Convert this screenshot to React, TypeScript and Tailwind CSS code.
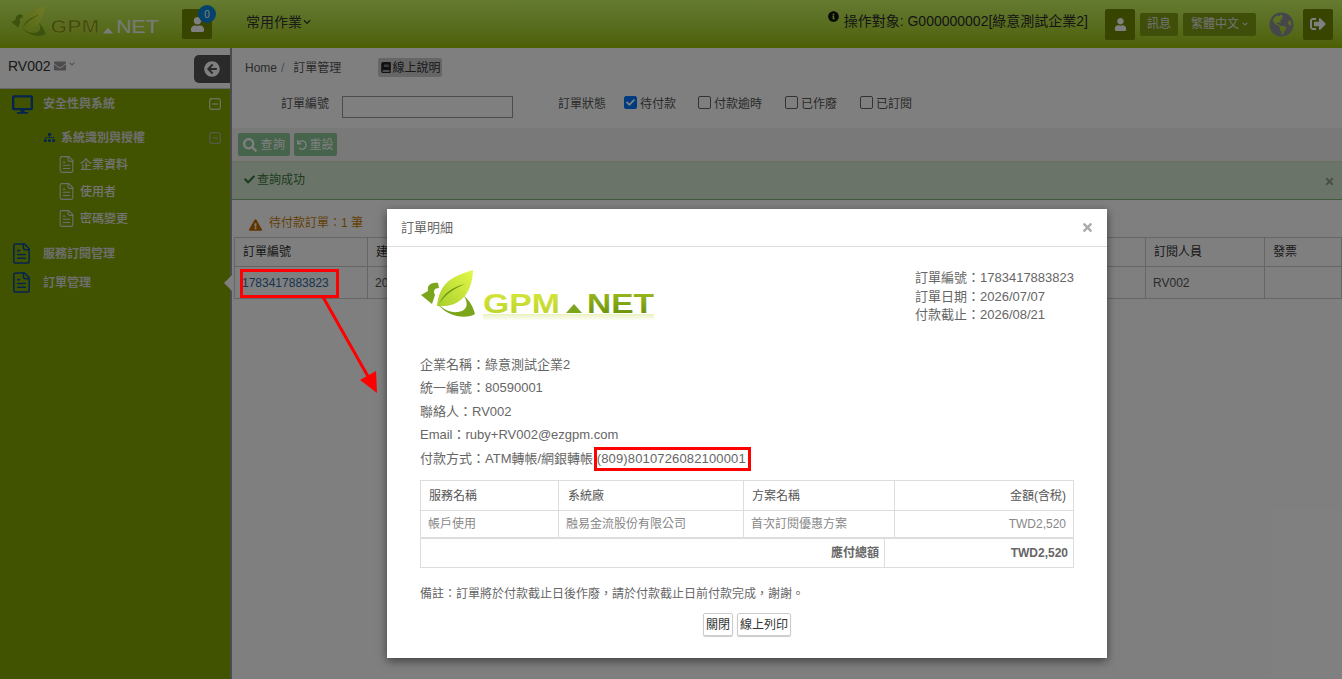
import React from "react";
import { FaUser, FaSearch, FaUndo, FaCheck, FaExclamationTriangle, FaInfoCircle, FaSignOutAlt, FaArrowCircleLeft, FaEnvelope, FaDesktop, FaSitemap, FaBook, FaGlobeAmericas, FaChevronDown, FaTimes } from "react-icons/fa";
import { LuFileText, LuSquareMinus } from "react-icons/lu";

const font = { fontFamily: '"Liberation Sans","Noto Sans CJK TC",sans-serif' };

function Logo({ w, h, light }: { w: number; h: number; light?: boolean }) {
  return (
    <svg width={w} height={h} viewBox="0 0 235 57" className="block">
      <defs>
        <linearGradient id="lf" x1="0" y1="1" x2="1" y2="0">
          <stop offset="0" stopColor="#a9cf2c" />
          <stop offset="1" stopColor="#e4f84a" />
        </linearGradient>
        <linearGradient id="gpm" x1="0" y1="0" x2="0" y2="1">
          <stop offset="0" stopColor="#d8ea3c" />
          <stop offset="1" stopColor="#b9d02a" />
        </linearGradient>
        <linearGradient id="net" x1="0" y1="0" x2="0" y2="1">
          <stop offset="0" stopColor="#a5c020" />
          <stop offset="1" stopColor="#5f8a08" />
        </linearGradient>
        <linearGradient id="fade" x1="0" y1="0" x2="0" y2="1">
          <stop offset="0" stopColor="#b9d02a" stopOpacity="0.3" />
          <stop offset="1" stopColor="#b9d02a" stopOpacity="0" />
        </linearGradient>
      </defs>
      <path d="M18 15 C10 14 7 18 8 23 L1 27 L12 36 L15 27 C13 23 14 20 19 20Z" fill="#7ba51a" />
      <path d="M53 2 C35 8 20 12 17 38 C36 40 52 30 53 2Z" fill="url(#lf)" />
      <path d="M19 36 C23 26 32 19 45 16 C33 21 25 27 19 36Z" fill="#6f9a14" />
      <path d="M18 36 C26 48 46 52 55 46 C53 38 49 32 44 28 C49 36 47 43 38 44 C30 45 23 41 18 36Z" fill="#7ba51a" />
      <text x="63" y="45" fontFamily="Liberation Sans" fontWeight="700" fontSize="28" textLength="77" lengthAdjust="spacingAndGlyphs" fill={light ? "#7f9a08" : "url(#gpm)"} stroke={light ? "#d4dc60" : "none"} strokeWidth={light ? 1 : 0}>GPM</text>
      <path d="M146 45 L154 36 L162 45Z" fill={light ? "#f4f4f4" : "#7ba51a"} />
      <text x="167" y="45" fontFamily="Liberation Sans" fontSize="28" fontWeight={light ? "400" : "700"} textLength="67" lengthAdjust="spacingAndGlyphs" fill={light ? "#f4f4f4" : "url(#net)"}>NET</text>
      {!light && <rect x="63" y="46" width="171" height="7" fill="url(#fade)" />}
    </svg>
  );
}

function HeaderSquare({ children, className = "" }: { children: React.ReactNode; className?: string }) {
  return <div className={`flex items-center justify-center rounded-[2px] bg-[#6f8a00] ${className}`}>{children}</div>;
}

function SideDoc({ label }: { label: string }) {
  return (
    <div className="flex h-[27px] items-center pl-[57px] text-[12px] font-medium text-[#e8e8e8]">
      <LuFileText className="mr-[4px] h-[19px] w-[19px] text-[#dddddd]" strokeWidth={1.4} />
      {label}
    </div>
  );
}

function SideTop({ label, className = "" }: { label: string; className?: string }) {
  return (
    <div className={`flex h-[29px] items-center pl-[10px] text-[12px] font-bold text-[#dddddd] ${className}`}>
      <LuFileText className="mr-[10px] h-[23px] w-[23px] text-[#0a4a9a]" strokeWidth={1.6} />
      {label}
    </div>
  );
}

function Check({ label, checked, className = "" }: { label: string; checked?: boolean; className?: string }) {
  return (
    <div className={`flex h-[16px] items-center gap-[3px] text-[12px] text-[#555555] ${className}`}>
      <span className={`-mt-[4px] flex h-[13px] w-[13px] items-center justify-center rounded-[2px] border ${checked ? "border-[#0075ff] bg-[#0075ff]" : "border-[#666666] bg-white"}`}>
        {checked && <FaCheck className="h-[9px] w-[9px] text-white" />}
      </span>
      {label}
    </div>
  );
}

const heads = [
  ["訂單編號", "w-[133px]"],
  ["建立日期", "w-[130px]"],
  ["付款截止", "w-[130px]"],
  ["服務名稱", "w-[130px]"],
  ["方案名稱", "w-[130px]"],
  ["金額", "w-[129px]"],
  ["狀態", "w-[129px]"],
  ["訂閱人員", "w-[119px]"],
  ["發票", "flex-1"],
];

export default function App() {
  return (
    <div style={font} className="relative h-[679px] w-[1342px] overflow-hidden bg-white text-[12px] text-[#555555]">
      <header className="flex h-[48px] items-center bg-gradient-to-b from-[#cbf662] to-[#9ac000]">
        <div className="mb-[2px] ml-[10px] w-[172px]"><Logo w={150} h={36} light /></div>
        <HeaderSquare className="relative h-[30px] w-[30px]">
          <FaUser className="h-[15px] w-[15px] text-white" />
          <span className="absolute -right-[4px] -top-[4px] flex h-[18px] w-[18px] items-center justify-center rounded-full bg-[#0a86d8] text-[10px] text-white">0</span>
        </HeaderSquare>
        <div className="mb-[4px] ml-[34px] flex items-center gap-[1px] text-[14px] text-[#333333]">
          常用作業<FaChevronDown className="h-[8px] w-[8px]" />
        </div>
        <div className="ml-auto flex items-center">
          <FaInfoCircle className="mb-[16px] mr-[5px] h-[11px] w-[11px] text-[#111111]" />
          <span className="mb-[6px] text-[14px] text-[#2b2b2b]">操作對象: G000000002[綠意測試企業2]</span>
          <HeaderSquare className="ml-[17px] h-[31px] w-[30px]"><FaUser className="h-[13px] w-[13px] text-white" /></HeaderSquare>
          <HeaderSquare className="ml-[5px] h-[23px] w-[38px] !bg-[#7f9c10] text-[12px] text-[#e6e6e6]">訊息</HeaderSquare>
          <HeaderSquare className="ml-[5px] h-[23px] w-[73px] gap-[3px] !bg-[#7f9c10] text-[12px] text-[#e6e6e6]">繁體中文<FaChevronDown className="h-[6px] w-[6px]" /></HeaderSquare>
          <FaGlobeAmericas className="ml-[13px] h-[25px] w-[25px] text-[#8a8f96]" />
          <HeaderSquare className="ml-[9px] mr-[9px] h-[31px] w-[30px]"><FaSignOutAlt className="h-[16px] w-[16px] text-white" /></HeaderSquare>
        </div>
      </header>

      <div className="flex h-[631px]">
        <aside className="relative h-full w-[232px] shrink-0 border-r-2 border-[#999999] bg-[#82a600]">
          <div className="flex h-[41px] items-center justify-between border-b border-[#cccccc] bg-white">
            <div className="mb-[4px] flex items-center gap-[3px] pl-[8px] text-[14px] text-[#333333]">
              RV002<FaEnvelope className="h-[12px] w-[12px] text-[#999999]" /><FaChevronDown className="mb-[4px] h-[6px] w-[6px] text-[#999999]" />
            </div>
            <div className="mt-[1px] flex h-[28px] w-[36px] items-center justify-center rounded-l-[5px] bg-[#555555]">
              <FaArrowCircleLeft className="h-[16px] w-[16px] text-white" />
            </div>
          </div>
          <div className="mt-[1px] flex h-[28px] items-center pl-[12px] pr-[8px] text-[12px] font-bold text-[#dddddd]">
            <FaDesktop className="mr-[10px] h-[21px] w-[21px] text-[#0a4a9a]" />
            <span className="flex-1">安全性與系統</span>
            <LuSquareMinus className="h-[14px] w-[14px] text-white" strokeWidth={1.6} />
          </div>
          <div className="mt-[6px] flex h-[27px] items-center pl-[44px] pr-[8px] text-[12px] font-bold text-[#dddddd]">
            <FaSitemap className="mr-[6px] h-[11px] w-[11px] text-[#0a4a9a]" />
            <span className="flex-1">系統識別與授權</span>
            <LuSquareMinus className="h-[14px] w-[14px] text-[#bbbbbb]" strokeWidth={1.6} />
          </div>
          <SideDoc label="企業資料" />
          <SideDoc label="使用者" />
          <SideDoc label="密碼變更" />
          <SideTop label="服務訂閱管理" className="mt-[7px]" />
          <SideTop label="訂單管理" />
          <span className="absolute -right-[2px] top-[227px] h-0 w-0 border-y-[8px] border-r-[8px] border-y-transparent border-r-[#ffffff]" />
        </aside>

        <main className="min-w-0 flex-1">
          <div className="flex h-[42px] items-center pb-[3px] pl-[13px]">
            <span>Home</span>
            <span className="ml-[4px] text-[#999999]">/</span>
            <span className="ml-[9px]">訂單管理</span>
            <span className="ml-[37px] flex h-[19px] items-center rounded-[2px] bg-[#cccccc] px-[2px] text-[#333333]">
              <FaBook className="h-[11px] w-[12px] text-[#222222]" />線上說明
            </span>
          </div>
          <div className="flex h-[38px] items-start pl-[49px] pt-[6px]">
            <span className="flex h-[16px] items-center">訂單編號</span>
            <div className="ml-[13px] h-[22px] w-[171px] border border-[#999999] bg-white" />
            <span className="ml-[45px] flex h-[16px] items-center">訂單狀態</span>
            <Check className="ml-[18px]" label="待付款" checked />
            <Check className="ml-[22px]" label="付款逾時" />
            <Check className="ml-[23px]" label="已作廢" />
            <Check className="ml-[23px]" label="已訂閱" />
          </div>
          <div className="flex h-[33px] items-center gap-[4px] bg-[#f3f3f3] pl-[6px]">
            <span className="flex h-[23px] w-[52px] items-center justify-center gap-[4px] rounded-[2px] bg-[#8cc896] tracking-[0.4px] text-white"><FaSearch className="h-[14px] w-[14px]" />查詢</span>
            <span className="flex h-[23px] w-[43px] items-center justify-center gap-[2px] rounded-[2px] bg-[#8cc896] text-white"><FaUndo className="h-[10px] w-[10px]" />重設</span>
          </div>
          <div className="relative flex h-[39px] items-center border-y border-[#cfdfc3] border-b-[#7fb47f] bg-[#d6e9d2] pb-[2px] pl-[12px] text-[#3c763d]">
            <FaCheck className="mr-[2px] h-[11px] w-[11px]" />查詢成功
            <FaTimes className="absolute right-[7px] top-[14px] h-[11px] w-[11px] text-[#909f8c]" />
          </div>
          <div className="flex h-[37px] items-end pb-[5px] pl-[17px] text-[#c77f0a]">
            <FaExclamationTriangle className="mb-[1px] mr-[7px] h-[12px] w-[13px] text-[#c26a00]" />
            <span>待付款訂單：1 筆</span>
          </div>
          <div className="ml-[2px] border border-[#cccccc]">
            <div className="flex h-[29px] border-b border-[#cccccc]">
              {heads.map(([h, w]) => (
                <div key={h} className={`flex items-center border-r border-[#cccccc] pl-[8px] text-[#333333] last:border-r-0 ${w}`}>{h}</div>
              ))}
            </div>
            <div className="flex h-[31px]">
              {["1783417883823", "2026/07/07", "", "", "", "", "", "RV002", ""].map((v, i) => (
                <div key={i} className={`flex items-center border-r border-[#cccccc] pl-[7px] last:border-r-0 ${heads[i][1]} ${i === 0 ? "text-[#2f6aa0]" : ""}`}>{v}</div>
              ))}
            </div>
          </div>
        </main>
      </div>

      {/* backdrop */}
      <div className="absolute inset-0 bg-black/50" />

      {/* modal */}
      <div className="absolute left-[387px] top-[209px] h-[449px] w-[720px] bg-white text-[13px] text-[#666666] shadow-[0_3px_9px_rgba(0,0,0,0.5)]">
        <div className="flex h-[38px] items-center justify-between border-b border-[#dddddd] px-[14px]">
          <span className="text-[#666666]">訂單明細</span>
          <FaTimes className="mr-[-1px] h-[13px] w-[13px] text-[#aaaaaa]" />
        </div>
        <div className="px-[33px]">
          <div className="flex justify-between pt-[21px]">
            <Logo w={235} h={57} />
            <div className="mt-[1px] text-[13px] leading-[18.5px] text-[#666666]">
              <div>訂單編號：1783417883823</div>
              <div>訂單日期：2026/07/07</div>
              <div>付款截止：2026/08/21</div>
            </div>
          </div>
          <div className="mt-[28px] text-[13px] leading-[23.4px]">
            <div>企業名稱：綠意測試企業2</div>
            <div>統一編號：80590001</div>
            <div>聯絡人：RV002</div>
            <div>Email：ruby+RV002@ezgpm.com</div>
            <div>付款方式：ATM轉帳/網銀轉帳 <span className="tracking-[0.15px]">(809)8010726082100001</span></div>
          </div>
          <div className="mt-[10px] border border-[#dddddd] text-[12px]">
            <div className="flex h-[30px] items-center border-b border-[#dddddd] text-[#555555]">
              <div className="flex h-full w-[138px] items-center border-r border-[#dddddd] pl-[8px]">服務名稱</div>
              <div className="flex h-full w-[185px] items-center border-r border-[#dddddd] pl-[9px]">系統廠</div>
              <div className="flex h-full w-[151px] items-center border-r border-[#dddddd] pl-[8px]">方案名稱</div>
              <div className="flex h-full flex-1 items-center justify-end pr-[7px]">金額(含稅)</div>
            </div>
            <div className="flex h-[28px] items-center border-b-2 border-[#dddddd] text-[#888888]">
              <div className="flex h-full w-[138px] items-center border-r border-[#dddddd] pl-[7px]">帳戶使用</div>
              <div className="flex h-full w-[185px] items-center border-r border-[#dddddd] pl-[7px]">融易金流股份有限公司</div>
              <div className="flex h-full w-[151px] items-center border-r border-[#dddddd] pl-[7px]">首次訂閱優惠方案</div>
              <div className="flex h-full flex-1 items-center justify-end pr-[7px]">TWD2,520</div>
            </div>
            <div className="flex h-[28px] items-center font-bold text-[#666666]">
              <div className="flex h-full flex-1 items-center justify-end border-r border-[#dddddd] pr-[5px]">應付總額</div>
              <div className="flex h-full w-[188px] items-center justify-end pr-[5px]">TWD2,520</div>
            </div>
          </div>
          <div className="mt-[18px] text-[12px] leading-[16px] text-[#666666]">備註：訂單將於付款截止日後作廢，請於付款截止日前付款完成，謝謝。</div>
          <div className="mt-[11px] flex justify-center gap-[4px] text-[12px] text-[#333333]">
            <span className="flex h-[23px] w-[30px] items-center justify-center rounded-[2px] border border-[#cccccc] shadow-[0_1px_1px_rgba(0,0,0,0.2)]">關閉</span>
            <span className="flex h-[23px] w-[54px] items-center justify-center rounded-[2px] border border-[#cccccc] shadow-[0_1px_1px_rgba(0,0,0,0.2)]">線上列印</span>
          </div>
        </div>
      </div>

      {/* red annotations */}
      <div className="absolute left-[240px] top-[269px] h-[29px] w-[99px] border-[3px] border-[#ff0000]" />
      <div className="absolute left-[594px] top-[447px] h-[24px] w-[157px] border-[3px] border-[#ff0000]" />
      <svg className="absolute left-[318px] top-[294px]" width="64" height="104" viewBox="0 0 64 104">
        <path d="M5 3 L52 86" stroke="#ff0000" strokeWidth="3" fill="none" />
        <path d="M59 99 L42 86 L58 77Z" fill="#ff0000" />
      </svg>
    </div>
  );
}
